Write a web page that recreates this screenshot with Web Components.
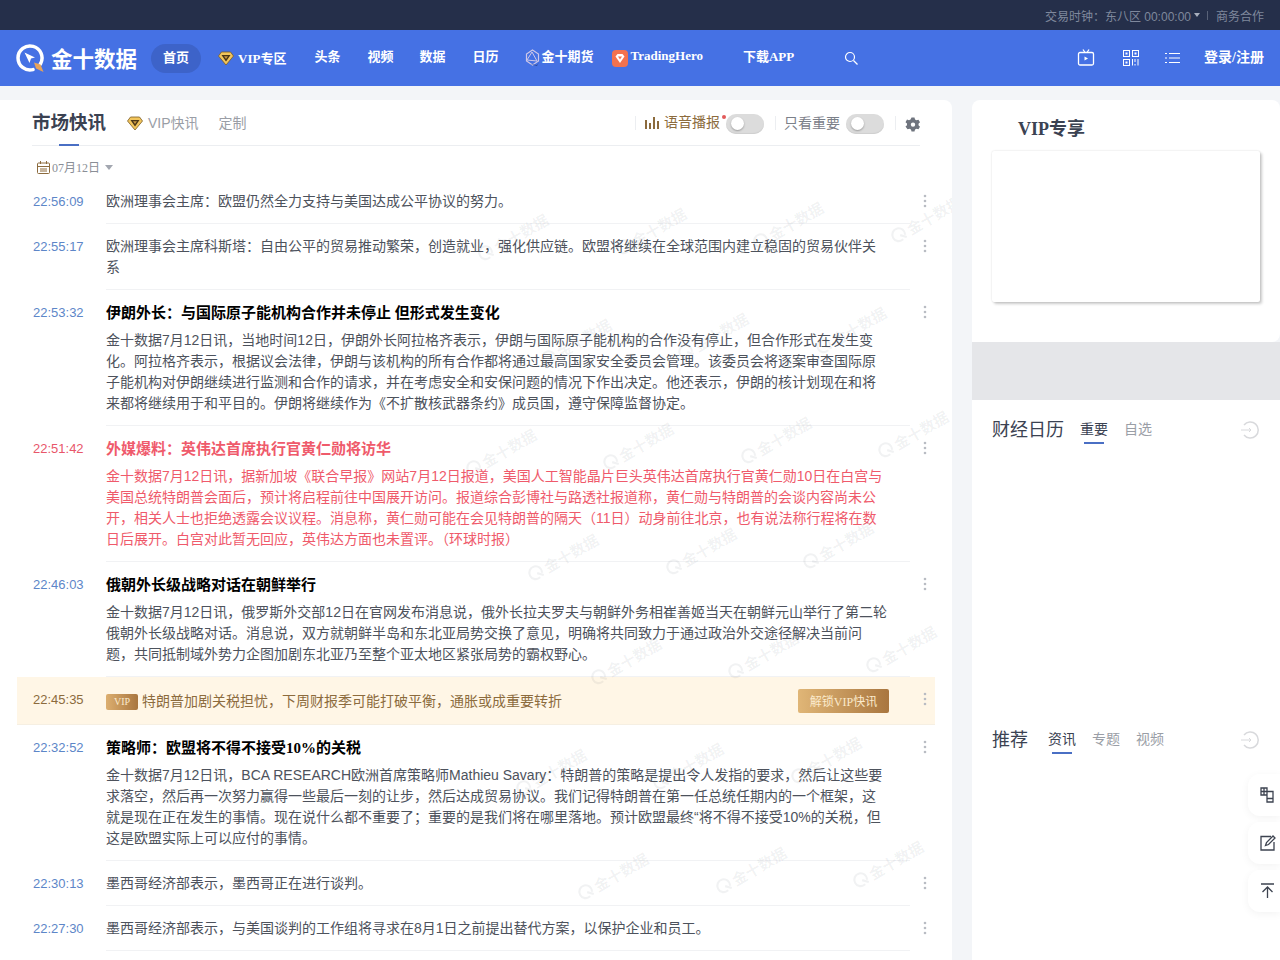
<!DOCTYPE html>
<html lang="zh">
<head>
<meta charset="utf-8">
<title>金十数据</title>
<style>
  html, body { margin: 0; padding: 0; height: 960px; overflow: hidden; }
  body { background: #f3f5f8; font-family: "Liberation Sans", "Noto Sans CJK SC", sans-serif; }
  .page { display: flex; gap: 20px; padding-top: 14px; }
</style>
</head>
<body>
<jin-topbar></jin-topbar>
<jin-nav></jin-nav>
<div class="page">
  <flash-panel>
    <flash-item time="22:56:09">欧洲理事会主席：欧盟仍然全力支持与美国达成公平协议的努力。</flash-item>
    <flash-item time="22:55:17">欧洲理事会主席科斯塔：自由公平的贸易推动繁荣，创造就业，强化供应链。欧盟将继续在全球范围内建立稳固的贸易伙伴关系</flash-item>
    <flash-item time="22:53:32" heading="伊朗外长：与国际原子能机构合作并未停止 但形式发生变化">金十数据7月12日讯，当地时间12日，伊朗外长阿拉格齐表示，伊朗与国际原子能机构的合作没有停止，但合作形式在发生变化。阿拉格齐表示，根据议会法律，伊朗与该机构的所有合作都将通过最高国家安全委员会管理。该委员会将逐案审查国际原子能机构对伊朗继续进行监测和合作的请求，并在考虑安全和安保问题的情况下作出决定。他还表示，伊朗的核计划现在和将来都将继续用于和平目的。伊朗将继续作为《不扩散核武器条约》成员国，遵守保障监督协定。</flash-item>
    <flash-item important time="22:51:42" heading="外媒爆料：英伟达首席执行官黄仁勋将访华">金十数据7月12日讯，据新加坡《联合早报》网站7月12日报道，美国人工智能晶片巨头英伟达首席执行官黄仁勋10日在白宫与美国总统特朗普会面后，预计将启程前往中国展开访问。报道综合彭博社与路透社报道称，黄仁勋与特朗普的会谈内容尚未公开，相关人士也拒绝透露会议议程。消息称，黄仁勋可能在会见特朗普的隔天（11日）动身前往北京，也有说法称行程将在数日后展开。白宫对此暂无回应，英伟达方面也未置评。（环球时报）</flash-item>
    <flash-item time="22:46:03" heading="俄朝外长级战略对话在朝鲜举行">金十数据7月12日讯，俄罗斯外交部12日在官网发布消息说，俄外长拉夫罗夫与朝鲜外务相崔善姬当天在朝鲜元山举行了第二轮俄朝外长级战略对话。消息说，双方就朝鲜半岛和东北亚局势交换了意见，明确将共同致力于通过政治外交途径解决当前问题，共同抵制域外势力企图加剧东北亚乃至整个亚太地区紧张局势的霸权野心。</flash-item>
    <flash-vip time="22:45:35">特朗普加剧关税担忧，下周财报季可能打破平衡，通胀或成重要转折</flash-vip>
    <flash-item time="22:32:52" heading="策略师：欧盟将不得不接受10%的关税">金十数据7月12日讯，BCA RESEARCH欧洲首席策略师Mathieu Savary：特朗普的策略是提出令人发指的要求，然后让这些要求落空，然后再一次努力赢得一些最后一刻的让步，然后达成贸易协议。我们记得特朗普在第一任总统任期内的一个框架，这就是现在正在发生的事情。现在说什么都不重要了；重要的是我们将在哪里落地。预计欧盟最终“将不得不接受10%的关税，但这是欧盟实际上可以应付的事情。</flash-item>
    <flash-item time="22:30:13">墨西哥经济部表示，墨西哥正在进行谈判。</flash-item>
    <flash-item time="22:27:30">墨西哥经济部表示，与美国谈判的工作组将寻求在8月1日之前提出替代方案，以保护企业和员工。</flash-item>
  </flash-panel>
  <side-column></side-column>
</div>
<float-tools></float-tools>
<script>
const DIAMOND = `<svg width="16" height="15" viewBox="0 0 16 15"><path d="M3.500 1h9L15.500 5 8 14 .5 5z" fill="#f2c55c" stroke="#7a5a22" stroke-width=".8"/><path d="M3.500 4h9L8 10.500z" fill="#4a3616"/><path d="M6 5.200h4L8 8z" fill="#c9973f"/></svg>`;

class JinTopbar extends HTMLElement {
  constructor() {
    super();
    this.attachShadow({ mode: "open" }).innerHTML = `
    <style>
      :host { display: flex; justify-content: flex-end; align-items: center; height: 30px; background: #252f4a; color: #7f889c; font: 12px "Liberation Sans", "Noto Sans CJK SC", sans-serif; padding-right: 16px; box-sizing: border-box; }
      i { width: 0; height: 0; border: 3px solid transparent; border-top: 4px solid #a9afbd; border-bottom: 0; margin: 0 7px 0 3px; }
      b { width: 1px; height: 9px; background: #596278; margin-right: 8px; }
    </style>
    <span>交易时钟：东八区 00:00:00</span><i></i><b></b><span>商务合作</span>`;
  }
}
customElements.define("jin-topbar", JinTopbar);

class JinNav extends HTMLElement {
  constructor() {
    super();
    this.attachShadow({ mode: "open" }).innerHTML = `
    <style>
      :host { display: flex; align-items: center; height: 56px; background: #4571e4; color: #fff; font: bold 13px "Liberation Serif", "Noto Sans CJK SC", serif; padding: 0 16px; box-sizing: border-box; }
      span { display: flex; align-items: center; white-space: nowrap; padding-bottom: 5px; }
      svg { display: block; flex: none; margin-top: 5px; }
      .logo { gap: 7px; font: bold 21.500px "Noto Sans CJK SC", sans-serif; width: 121px; padding-bottom: 2px; }
      .logo svg { margin-top: 2px; }
      .pill { background: #3d63c9; border-radius: 15px; width: 50px; height: 29px; justify-content: center; margin-left: 14px; box-sizing: border-box; padding-bottom: 4px; }
      .login { margin-left: 24px; font-size: 14px; }
      .inner { padding: 0; margin-top: 3px; }
    </style>
    <span class="logo"><svg width="28" height="28" viewBox="0 0 28 28"><path d="M24.400 20A12 12 0 1 0 17 25.600" fill="none" stroke="#fff" stroke-width="3.500" stroke-linecap="round"/><path d="M8.500 8.500l10.500 5-4 1-1.500 4.500z" fill="#fff"/><path d="M18 18.500l6.500 2 3 7.500-7.500-3.500z" fill="#e7a35a"/></svg>金十数据</span>
    <span class="pill">首页</span>
    <span style="margin-left:17px;gap:4px">${DIAMOND}<span class="inner">VIP专区</span></span>
    <span style="margin-left:28px">头条</span>
    <span style="margin-left:27px">视频</span>
    <span style="margin-left:26px">数据</span>
    <span style="margin-left:27px">日历</span>
    <span style="margin-left:27px;gap:1px"><svg width="15" height="18" viewBox="0 0 15 18"><path d="M7.500 1l6 4v7l-6 4-6-4V5z" fill="none" stroke="#cfc8e8" stroke-width="1.200"/><path d="M2 11l5-8 5 9z" fill="none" stroke="#cfc8e8"/><path d="M5 15l7 1 2-3-2 4z" fill="#2c4796"/></svg>金十期货</span>
    <span style="margin-left:19px;gap:2px"><svg width="16" height="17" viewBox="0 0 16 17"><rect width="16" height="17" rx="4" fill="#f2724f"/><path d="M3.500 6.500L5.500 4h5l2 2.500L8 13z" fill="#fff"/><path d="M6 6.500h4L8 9.500z" fill="#f2724f"/></svg>TradingHero</span>
    <span style="margin-left:40px">下载APP</span>
    <span style="margin-left:50px"><svg width="15" height="15" viewBox="0 0 15 15" fill="none" stroke="#fff" stroke-width="1.200"><circle cx="6" cy="6" r="4.500"/><path d="M9.500 9.500l4 4"/></svg></span>
    <span style="margin-left:auto"><svg width="18" height="18" viewBox="0 0 18 18" fill="none" stroke="#fff" stroke-width="1.300"><rect x="1.500" y="3.500" width="15" height="12.500" rx="1.500"/><path d="M6 .5l2 3M12 .5l-2 3"/><path d="M7.500 7.500l3.500 2-3.500 2z" fill="#fff" stroke="none"/></svg></span>
    <span style="margin-left:28px"><svg width="16" height="16" viewBox="0 0 16 16" fill="none" stroke="#fff" stroke-width="1"><rect x=".5" y=".5" width="6" height="6"/><rect x="9.500" y=".5" width="6" height="6"/><rect x=".5" y="9.500" width="6" height="6"/><rect x="2.500" y="2.500" width="2" height="2" fill="#fff" stroke="none"/><rect x="11.500" y="2.500" width="2" height="2" fill="#fff" stroke="none"/><rect x="2.500" y="11.500" width="2" height="2" fill="#fff" stroke="none"/><path d="M9.500 9v6.500M12 9v3M12 14v1.500M15 9v6.500"/></svg></span>
    <span style="margin-left:26px"><svg width="15" height="12" viewBox="0 0 15 12" stroke="#fff" stroke-width="1"><path d="M4 1.500h11M4 6h11M4 10.500h11M0 1.500h2M0 6h2M0 10.500h2"/></svg></span>
    <span class="login">登录/注册</span>`;
  }
}
customElements.define("jin-nav", JinNav);

class ToggleSwitch extends HTMLElement {
  constructor() {
    super();
    this.attachShadow({ mode: "open" }).innerHTML = `
    <style>
      :host { display: block; width: 38px; height: 20px; border-radius: 10px; background: #dcdcdc; box-shadow: inset 0 -1px 1px #cfcfcf; position: relative; flex: none; margin-top: 2px; }
      i { position: absolute; left: 5px; top: 3px; width: 13px; height: 13px; border-radius: 50%; background: #fff; box-shadow: 0 1px 2px rgba(0,0,0,.3); }
    </style><i></i>`;
  }
}
customElements.define("toggle-switch", ToggleSwitch);

// watermark tiles sit on a slanted lattice, only the part right of the time column shows
function watermarks() {
  let html = "";
  for (let r = 0; r < 7; r++) {
    for (let c = -2; c < 9; c++) {
      const x = 513 + 137.5 * c - 75 * r;
      const y = 137 - 6 * c + 110.5 * r;
      if (x < 500 || x > 930) continue;
      html += `<span style="left:${x}px;top:${y}px"><svg width="15" height="15" viewBox="0 0 28 28" fill="none" stroke="currentColor" stroke-width="4"><path d="M24.400 20A12 12 0 1 0 17 25.600"/><path d="M16 16l9 9"/></svg>金十数据</span>`;
    }
  }
  return html;
}

class FlashPanel extends HTMLElement {
  constructor() {
    super();
    this.attachShadow({ mode: "open" }).innerHTML = `
    <style>
      :host { display: block; position: relative; width: 952px; height: 900px; background: #fff; border-radius: 0 8px 0 0; box-sizing: border-box; padding-left: 17px; overflow: hidden; font: 14px/21px "Liberation Sans", "Noto Sans CJK SC", sans-serif; }
      header { display: flex; align-items: center; height: 46px; margin: 0 15px; width: 888px; border-bottom: 1px solid #eceef1; box-sizing: border-box; color: #9a9ea6; position: relative; }
      h2 { margin: -3px 0 0; font: bold 18.500px "Noto Sans CJK SC", sans-serif; color: #3b4252; }
      .tab { display: flex; align-items: center; gap: 5px; margin: 2px 0 0 20px; }
      .tab.first { margin-left: 21px; }
      .bar { position: absolute; left: 27px; bottom: -1px; width: 20px; height: 2px; background: #4a6fc4; }
      .right { margin: 0 -1px 0 auto; display: flex; align-items: center; }
      .sep { width: 1px; height: 14px; background: #eceef1; }
      .voice { display: flex; align-items: center; gap: 4px; color: #8c6b3d; margin-left: 9px; position: relative; padding-right: 6px; }
      .voice::after { content: ""; position: absolute; right: 0; top: 3px; width: 4px; height: 4px; border-radius: 50%; background: #e25a5a; }
      .only { color: #7b8089; margin: 2px 6px 0 8px; }
      .date { display: flex; align-items: center; height: 33px; padding: 9px 0 0 20px; box-sizing: border-box; color: #8a8e96; font: 12px "Liberation Serif", "Noto Sans CJK SC", serif; }
      .date em { width: 0; height: 0; border: 4px solid transparent; border-top: 5px solid #a3a7b0; border-bottom: 0; margin-left: 5px; }
      .marks span { position: absolute; display: flex; align-items: center; gap: 3px; transform: translate(-50%, -50%) rotate(-30deg); white-space: nowrap; color: rgba(60,70,90,.07); font: bold 15px "Noto Sans CJK SC", sans-serif; pointer-events: none; }
    </style>
    <header>
      <h2>市场快讯</h2><i class="bar"></i>
      <span class="tab first">${DIAMOND}VIP快讯</span>
      <span class="tab">定制</span>
      <div class="right">
        <i class="sep"></i>
        <span class="voice"><svg width="15" height="12" viewBox="0 0 15 12" fill="#8c6b3d"><rect y="3" width="2" height="9"/><rect x="4" y="6" width="2" height="6"/><rect x="8" width="2" height="12"/><rect x="12" y="4" width="2" height="8"/></svg>语音播报</span>
        <toggle-switch></toggle-switch>
        <i class="sep" style="margin-left:11px"></i>
        <span class="only">只看重要</span>
        <toggle-switch></toggle-switch>
        <i class="sep" style="margin-left:11px"></i>
        <svg style="margin:4px 0 0 9px" width="16" height="16" viewBox="0 0 16 16"><path fill="#6f747e" fill-rule="evenodd" d="M6.500 .5h3l.5 2 1.500.8 2-.6 1.500 2.600-1.500 1.400v1.600l1.500 1.400-1.500 2.600-2-.6-1.500.8-.5 2h-3l-.5-2-1.500-.8-2 .6L.5 9.600 2 8.200V6.600L.5 5.200 2 2.600l2 .6 1.500-.8zM8 5.400a2.200 2.200 0 1 0 0 4.400 2.200 2.200 0 0 0 0-4.400z"/></svg>
      </div>
    </header>
    <div class="date"><svg width="13" height="13" viewBox="0 0 13 13" fill="none" stroke="#8c6b3d" style="margin-right:2px"><rect x=".5" y="2" width="12" height="10.500" rx="1"/><path d="M.5 5.500h12M3.500 0v3M9.500 0v3M3 8h7M3 10h7"/></svg>07月12日<em></em></div>
    <slot></slot>
    <div class="marks">${watermarks()}</div>`;
  }
}
customElements.define("flash-panel", FlashPanel);

const DOTS = `<svg width="4" height="14" viewBox="0 0 4 14" fill="#b9bcc3"><circle cx="2" cy="2" r="1.300"/><circle cx="2" cy="7" r="1.300"/><circle cx="2" cy="12" r="1.300"/></svg>`;

class FlashItem extends HTMLElement {
  constructor() {
    super();
    const heading = this.getAttribute("heading");
    this.attachShadow({ mode: "open" }).innerHTML = `
    <style>
      :host { display: flex; position: relative; color: #4d525c; }
      :host([important]) { color: #ef5a6b; }
      time { width: 89px; padding: 12px 0 0 16px; box-sizing: border-box; font-size: 13px; color: #5d86c8; flex: none; }
      :host([important]) time { color: #e8566a; }
      .body { width: 804px; padding: 12px 0 11px; border-bottom: 1px solid #f1f2f4; }
      h3 { margin: 0 0 5px; font: bold 15px/23px "Liberation Serif", "Noto Sans CJK SC", serif; color: #000; }
      :host([important]) h3 { color: #ef5a6b; }
      .text { width: 783px; }
      .dots { position: absolute; left: 906px; top: 15px; line-height: 0; }
    </style>
    <time>${this.getAttribute("time")}</time>
    <div class="body">${heading ? `<h3>${heading}</h3>` : ""}<div class="text"><slot></slot></div></div>
    <div class="dots">${DOTS}</div>`;
  }
}
customElements.define("flash-item", FlashItem);

class FlashVip extends HTMLElement {
  constructor() {
    super();
    this.attachShadow({ mode: "open" }).innerHTML = `
    <style>
      :host { display: flex; align-items: center; position: relative; width: 918px; height: 48px; box-sizing: border-box; border-bottom: 1px solid #f6efe2; background: #fff6e6; color: #8c6b3d; padding-top: 2px; }
      time { width: 89px; padding-left: 16px; box-sizing: border-box; font-size: 13px; margin-top: -5px; }
      .badge { width: 32px; height: 16px; border-radius: 2px; background: linear-gradient(90deg, #dcae6f, #a9763f); color: #fbeacc; font: 10px/16px "Liberation Serif", serif; text-align: center; margin-right: 4px; }
      button { position: absolute; left: 781px; top: 12px; width: 91px; height: 24px; border: 0; border-radius: 2px; background: linear-gradient(90deg, #e0b677, #a9763f); color: #fbeacc; font: 12px "Liberation Serif", "Noto Sans CJK SC", serif; padding: 0; }
      .dots { position: absolute; left: 906px; top: 15px; line-height: 0; }
    </style>
    <time>${this.getAttribute("time")}</time><span class="badge">VIP</span><slot></slot>
    <button>解锁VIP快讯</button>
    <div class="dots">${DOTS}</div>`;
  }
}
customElements.define("flash-vip", FlashVip);

const BACK = `<svg width="20" height="20" viewBox="0 0 20 20" fill="none" stroke="#d8d9dc" stroke-width="1.500"><path d="M4 5a8 8 0 1 1 0 10"/><path d="M1 10h10M9 8l2 2-2 2" stroke-width="1"/></svg>`;

class SideColumn extends HTMLElement {
  constructor() {
    super();
    this.attachShadow({ mode: "open" }).innerHTML = `
    <style>
      :host { display: block; width: 308px; height: 900px; font: 14px "Liberation Sans", "Noto Sans CJK SC", sans-serif; color: #9a9ea6; }
      .vip { height: 242px; background: #fff; border-radius: 8px 8px 8px 0; box-sizing: border-box; padding: 16px 20px 0; }
      .vip h3 { margin: 0 0 9px 26px; font: bold 18px/26px "Liberation Serif", "Noto Sans CJK SC", serif; color: #3b4252; }
      .box { height: 151px; width: 268px; background: #fff; border-radius: 2px; box-shadow: 2px 2px 3px rgba(0,0,0,.2), 0 0 2px rgba(0,0,0,.15); }
      .band { height: 58px; background: #e5e6e9; }
      .sec { background: #fff; padding: 16px 20px 0; box-sizing: border-box; }
      .head { display: flex; align-items: center; height: 26px; margin-top: -1px; }
      .head h3 { margin: 0 16px 0 0; font: 18px "Noto Sans CJK SC", sans-serif; color: #3b4252; }
      .head span { margin-right: 16px; position: relative; }
      .on { color: #3b4252; }
      .on::after { content: ""; position: absolute; left: 4px; right: 4px; bottom: -6px; height: 2px; background: #4a6fc4; }
      .head svg { margin: 4px 0 0 auto; }
    </style>
    <div class="vip"><h3>VIP专享</h3><div class="box"></div></div>
    <div class="band"></div>
    <div class="sec" style="height:310px"><div class="head"><h3>财经日历</h3><span class="on">重要</span><span>自选</span>${BACK}</div></div>
    <div class="sec" style="height:290px"><div class="head"><h3 style="margin-right:20px">推荐</h3><span class="on">资讯</span><span>专题</span><span>视频</span>${BACK}</div></div>`;
  }
}
customElements.define("side-column", SideColumn);

class FloatTools extends HTMLElement {
  constructor() {
    super();
    this.attachShadow({ mode: "open" }).innerHTML = `
    <style>
      :host { position: fixed; right: 0; top: 774px; width: 32px; display: flex; flex-direction: column; gap: 6px; }
      div { height: 42px; background: #fff; border-radius: 12px 0 0 12px; box-shadow: 0 2px 8px rgba(0,0,0,.05); display: flex; align-items: center; padding-left: 12px; box-sizing: border-box; }
      svg { fill: none; stroke: #3d4350; stroke-width: 1.300; }
    </style>
    <div><svg width="14" height="16" viewBox="0 0 14 16"><path d="M1 1h6v7H1zM1 4.500h6M4 1v7M7 4.500h6V15H7V8M7 11.500h6"/></svg></div>
    <div><svg width="16" height="16" viewBox="0 0 16 16"><path d="M11 1.500H1v13.500h13V7"/><path d="M5.500 10.500l1-3L13 1l2 2-6.500 6.500z"/></svg></div>
    <div><svg width="16" height="16" viewBox="0 0 16 16"><path d="M1 1h13M7.500 15V4M2.500 9l5-5 5 5"/></svg></div>`;
  }
}
customElements.define("float-tools", FloatTools);
</script>
</body>
</html>
